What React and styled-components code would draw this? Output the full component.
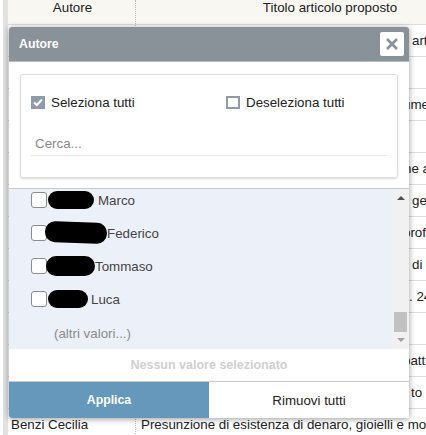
import styled, { createGlobalStyle } from "styled-components"

const GlobalStyle = createGlobalStyle`
html, body {
  margin: 0;
  padding: 0;
  background: #fff;
  overflow: hidden;
}
body {
  font-family: "Liberation Sans", Arial, sans-serif;
  font-size: 13.33px;
  color: #222;
}
`

// only the tail of each title shows past the right edge of the dialog
const behindRows = [
  { text: "art", indent: 276 },
  { text: "", indent: 0 },
  { text: "ume", indent: 267 },
  { text: "", indent: 0 },
  { text: "ne a", indent: 268 },
  { text: "ge", accent: "l", indent: 276 },
  { text: "prof", indent: 267 },
  { text: "di", indent: 276 },
  { text: ". 24", indent: 273 },
  { text: "", indent: 0 },
  { text: "patt", indent: 267 },
  { text: "to c", indent: 275 },
]

const names = [
  { name: "Marco", blob: 46, high: 18, shift: 1, gap: 4, tilt: 0 },
  { name: "Federico", blob: 62, high: 21, shift: -2, gap: 0, tilt: 2 },
  { name: "Tommaso", blob: 49, high: 20, shift: -1, gap: 0, tilt: 0 },
  { name: "Luca", blob: 40, high: 18, shift: 1, gap: 3, tilt: 0 },
]

export default function App() {
  return (
    <Page>
      <GlobalStyle />
      <Table>
        <HeaderRow>
          <AuthorHead>Autore</AuthorHead>
          <TitleHead>Titolo articolo proposto</TitleHead>
        </HeaderRow>
        {behindRows.map((row, i) => (
          <Row key={i}>
            <AuthorCell />
            <TitleCell $indent={row.indent}>
              {row.text}
              {row.accent && <Accent>&nbsp;{row.accent}</Accent>}
            </TitleCell>
          </Row>
        ))}
        <Row>
          <AuthorCell>Benzi Cecilia</AuthorCell>
          <TitleCell $indent={5}>Presunzione di esistenza di denaro, gioielli e mobili</TitleCell>
        </Row>
      </Table>

      <Modal>
        <ModalHeader>
          <ModalTitle>Autore</ModalTitle>
          <CloseButton aria-label="Chiudi">
            <svg width="14" height="14" viewBox="0 0 14 14">
              <path d="M2 2 L12 12 M12 2 L2 12" stroke="#8a9299" strokeWidth="2.6" fill="none" />
            </svg>
          </CloseButton>
        </ModalHeader>

        <ModalBody>
          <FilterCard>
            <SelectRow>
              <SelectOption>
                <SquareCheck $checked>
                  <svg width="10" height="9" viewBox="0 0 10 9">
                    <path d="M1 4.5 L3.8 7 L9 1.5" stroke="#fff" strokeWidth="2" fill="none" />
                  </svg>
                </SquareCheck>
                Seleziona tutti
              </SelectOption>
              <SelectOption>
                <SquareCheck />
                Deseleziona tutti
              </SelectOption>
            </SelectRow>
            <SearchInput placeholder="Cerca..." />
          </FilterCard>
        </ModalBody>

        <ListArea>
          <ValueList>
            {names.map((item) => (
              <ValueRow key={item.name}>
                <RowCheck />
                <Redaction
                  $width={item.blob}
                  $height={item.high}
                  $shift={item.shift}
                  $gap={item.gap}
                  $tilt={item.tilt}
                />
                {item.name}
              </ValueRow>
            ))}
            <MoreValues>(altri valori...)</MoreValues>
          </ValueList>
          <ScrollTrack>
            <ArrowUp />
            <ScrollThumb />
            <ArrowDown />
          </ScrollTrack>
        </ListArea>

        <StatusLine>Nessun valore selezionato</StatusLine>

        <Footer>
          <ApplyButton>Applica</ApplyButton>
          <RemoveButton>Rimuovi tutti</RemoveButton>
        </Footer>
      </Modal>
    </Page>
  )
}

const Page = styled.div`
position: relative;
width: 426px;
height: 435px;
overflow: hidden;
background: #fff;
`

const Table = styled.div`
width: 516px;
margin-left: 3px;
padding-left: 5px;
display: flex;
flex-direction: column;
background: linear-gradient(to right, #e2e2e2 5px, #fff 5px);
`

const HeaderRow = styled.div`
display: grid;
grid-template-columns: 128px 388px;
height: 25px;
box-sizing: border-box;
flex-shrink: 0;
background: #f8f7f2;
border-bottom: 1px solid #ddd;
`

const AuthorHead = styled.div`
display: flex;
justify-content: center;
padding: 0 0 0 2px;
line-height: 15px;
border-right: 1px dotted #bbb;
`

const TitleHead = styled.div`
text-align: center;
line-height: 15px;
`

const Row = styled.div`
display: grid;
grid-template-columns: 128px 388px;
height: 32px;
box-sizing: border-box;
flex-shrink: 0;
border-bottom: 1px solid #ddd;
`

const AuthorCell = styled.div`
display: flex;
align-items: center;
padding-left: 3px;
border-right: 1px dotted #bbb;
`

const TitleCell = styled.div`
display: flex;
align-items: center;
padding-left: ${(props) => props.$indent}px;
white-space: nowrap;
overflow: hidden;
`

const Accent = styled.span`
color: #d8a05a;
`

const Modal = styled.div`
position: absolute;
left: 9px;
top: 27px;
width: 400px;
height: 391px;
display: flex;
flex-direction: column;
background: #fff;
border-radius: 3px;
box-shadow: 0 1px 6px rgba(0, 0, 0, 0.4);
overflow: hidden;
`

const ModalHeader = styled.div`
display: flex;
align-items: center;
justify-content: space-between;
height: 35px;
flex-shrink: 0;
padding: 0 5px 0 10px;
background: #8a9299;
border-bottom: 1px solid #b9bdc1;
box-sizing: border-box;
`

const ModalTitle = styled.span`
color: #fff;
font-size: 12.3px;
font-weight: bold;
`

const CloseButton = styled.button`
display: flex;
align-items: center;
justify-content: center;
width: 24px;
height: 24px;
padding: 0;
border: 0;
border-radius: 2px;
background: #fff;
`

const ModalBody = styled.div`
height: 127px;
flex-shrink: 0;
padding: 12px 11px 0 11px;
box-sizing: border-box;
border-bottom: 1px solid #c9c9c9;
`

const FilterCard = styled.div`
height: 104px;
box-sizing: border-box;
padding: 21px 10px 0;
border: 1px solid #ddd;
border-radius: 3px;
box-shadow: 0 1px 2px rgba(0, 0, 0, 0.15);
`

const SelectRow = styled.div`
display: grid;
grid-template-columns: 195px 1fr;
height: 14px;
`

const SelectOption = styled.label`
display: flex;
align-items: flex-start;
gap: 6px;
font-size: 13.33px;
line-height: 13px;
color: #222;
`

const SquareCheck = styled.span`
display: flex;
align-items: center;
justify-content: center;
width: 14px;
height: 13px;
box-sizing: border-box;
background: ${(props) => (props.$checked ? "#8f9ba6" : "#fff")};
border: 2px solid #8f9ba6;
`

const SearchInput = styled.input`
display: block;
width: 100%;
height: 24px;
margin-top: 22px;
padding: 0 4px;
box-sizing: border-box;
border: 0;
border-bottom: 1px solid #e6e6e6;
outline: none;
background: transparent;
font-family: inherit;
font-size: 13.33px;

&::placeholder {
  color: #8a8a8a;
  opacity: 1;
}
`

const ListArea = styled.div`
display: flex;
height: 160px;
flex-shrink: 0;
overflow: hidden;
background: #ecf1f9;
`

const ValueList = styled.div`
flex: 1;
display: flex;
flex-direction: column;
margin-top: -5px;
padding-left: 22px;
`

const ValueRow = styled.div`
display: flex;
align-items: center;
height: 33px;
flex-shrink: 0;
font-size: 13.33px;
color: #444;
`

const RowCheck = styled.span`
width: 16px;
height: 16px;
margin-top: -2px;
box-sizing: border-box;
flex-shrink: 0;
background: #fff;
border: 1px solid #8c8c8c;
border-radius: 3px;
`

const Redaction = styled.span`
width: ${(props) => props.$width}px;
height: ${(props) => props.$height}px;
margin-top: -2px;
margin-left: ${(props) => props.$shift}px;
margin-right: ${(props) => props.$gap}px;
flex-shrink: 0;
background: #000;
border-radius: 10px;
transform: rotate(${(props) => props.$tilt}deg);
`

const MoreValues = styled.div`
display: flex;
align-items: center;
height: 33px;
padding: 2px 0 0 23px;
color: #8a8a8a;
`

const ScrollTrack = styled.div`
width: 17px;
display: flex;
flex-direction: column;
align-items: center;
background: #f1f1f1;
`

const ArrowUp = styled.span`
margin-top: 7px;
border-left: 4px solid transparent;
border-right: 4px solid transparent;
border-bottom: 4px solid #505050;
`

const ScrollThumb = styled.span`
width: 13px;
height: 20px;
margin-top: 112px;
background: #c1c1c1;
`

const ArrowDown = styled.span`
margin-top: 6px;
border-left: 4px solid transparent;
border-right: 4px solid transparent;
border-top: 4px solid #a3a3a3;
`

const StatusLine = styled.div`
display: flex;
align-items: center;
justify-content: center;
height: 33px;
flex-shrink: 0;
box-sizing: border-box;
border-bottom: 1px solid #c9c9c9;
font-size: 12.5px;
font-weight: bold;
color: #d0d0d0;
`

const Footer = styled.div`
display: grid;
grid-template-columns: 1fr 1fr;
flex: 1;
`

const ApplyButton = styled.button`
border: 0;
background: #6598bb;
color: #fff;
font-family: inherit;
font-size: 12.3px;
font-weight: bold;
`

const RemoveButton = styled.button`
border: 0;
background: #fff;
color: #222;
font-family: inherit;
font-size: 13.33px;
`
